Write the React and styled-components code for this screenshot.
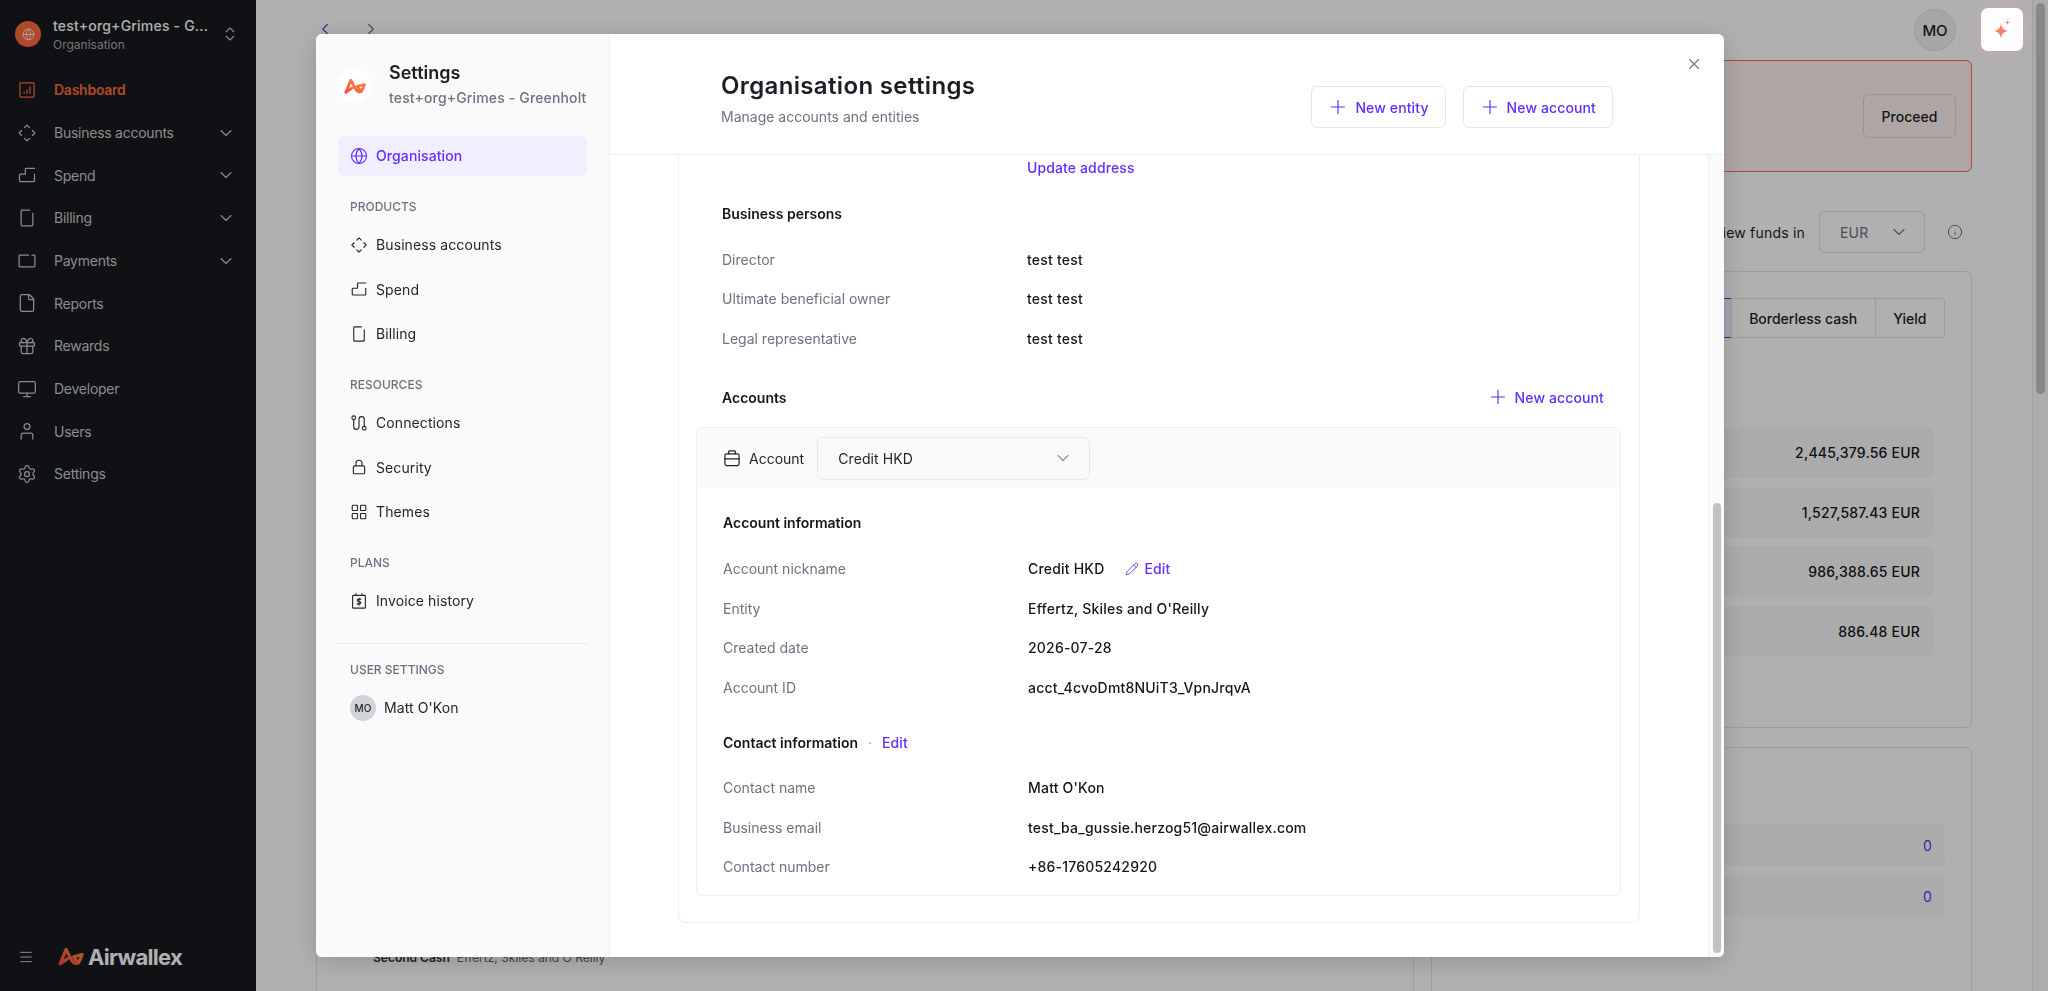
import React from 'react';
import styled, { createGlobalStyle } from 'styled-components';
import {
  ChevronDown, ChevronLeft, ChevronRight, ChevronsUpDown, File, Gift, Globe, Info, LayoutGrid,
  Menu, Monitor, Pencil, Plus, Settings as SettingsIcon, X,
} from 'lucide-react';

const PURPLE = '#612fff';
const FONT = `Inter, "Noto Sans", "Liberation Sans", sans-serif`;

const Global = createGlobalStyle`
  html, body { margin: 0; height: 100%; overflow: hidden; }
  body { font-family: ${FONT}; color: #1b1f24; background: #fff; }
  * { box-sizing: border-box; }
`;

/* small hand drawn icons that the packages don't have */
const Svg = ({ size = 18, children, sw = 1.5 }) => (
  <svg width={size} height={size} viewBox="0 0 24 24" fill="none" stroke="currentColor" strokeWidth={sw} strokeLinecap="round" strokeLinejoin="round">
    {children}
  </svg>
);
const DashIcon = (p) => <Svg {...p}><rect x="3.5" y="3.5" width="17" height="17" rx="1" /><path d="M8.5 16v-1.5M12 16v-4M15.5 16V8" /></Svg>;
const DiamondIcon = (p) => <Svg {...p}><path d="M9 5.5 12 2.5l3 3M18.5 9l3 3-3 3M15 18.5l-3 3-3-3M5.5 15l-3-3 3-3" /></Svg>;
const StairIcon = (p) => <Svg {...p}><path d="M21 4H11a1 1 0 0 0-1 1v6H4a1 1 0 0 0-1 1v7a1 1 0 0 0 1 1h16a1 1 0 0 0 1-1v-8" /></Svg>;
const BillIcon = (p) => <Svg {...p}><path d="M15 2.5H6a1 1 0 0 0-1 1v17a1 1 0 0 0 1 1h12a1 1 0 0 0 1-1V6.5" /></Svg>;
const PayIcon = (p) => <Svg {...p}><path d="M14 5H3.5a1 1 0 0 0-1 1v12a1 1 0 0 0 1 1h17a1 1 0 0 0 1-1V6a1 1 0 0 0-1-1H18" /></Svg>;
const UserIcon = (p) => <Svg {...p}><circle cx="12" cy="6.5" r="3.5" /><path d="M5 21.5V17a2.5 2.5 0 0 1 2.5-2.5h9A2.5 2.5 0 0 1 19 17v4.5" /></Svg>;
const RouteIcon = (p) => <Svg {...p}><circle cx="5" cy="5" r="2.5" /><circle cx="19" cy="19" r="2.5" /><path d="M5 7.5V17a3.5 3.5 0 0 0 7 0V7a3.5 3.5 0 0 1 7 0v9.5" /></Svg>;
const LockIcon = (p) => <Svg {...p}><path d="M8 10V7a4 4 0 0 1 8 0v3" /><rect x="4.5" y="10.5" width="15" height="10.5" rx="1.5" /></Svg>;
const InvoiceIcon = (p) => <Svg {...p}><rect x="3.5" y="4.5" width="17" height="17" rx="1" /><path d="M8 2v2.5M16 2v2.5M14.5 9.500h-3.200a1.600 1.600 0 0 0 0 3.200h1.400a1.600 1.600 0 0 1 0 3.200H9.500M12 8v9.500" /></Svg>;
const CaseIcon = (p) => <Svg {...p}><rect x="3.5" y="7" width="17" height="14" rx="2" /><path d="M8 7V4.500a1 1 0 0 1 1-1h6a1 1 0 0 1 1 1V7M3.500 13h17" /></Svg>;

const LogoMark = ({ size = 24, id = 'awx' }) => (
  <svg width={size} height={size * 0.72} viewBox="0 0 32 23" fill="none">
    <defs>
      <linearGradient id={id} x1="0" y1="1" x2="1" y2="0">
        <stop offset="0" stopColor="#ff4b3e" />
        <stop offset="1" stopColor="#ff8a3a" />
      </linearGradient>
    </defs>
    <path d="M2.500 20 11 14 M2.500 20 9.500 3 15 13.500c1.700 3.300 4 6 6.500 6 2.200 0 3.500-1.700 5-5l2-5.500-10 2.500 5.500 7.500" stroke={`url(#${id})`} strokeWidth="3.800" strokeLinecap="round" strokeLinejoin="round" />
  </svg>
);

const Page = styled.div`
  display: flex;
  height: 991px;
  width: 2048px;
  overflow: hidden;
`;

/* dark left rail */
const Rail = styled.aside`
  width: 256px;
  flex: none;
  background: #16191d;
  color: #cbcbcb;
  display: flex;
  flex-direction: column;
`;
const OrgSwitch = styled.div`
  height: 68.67px;
  display: flex;
  align-items: center;
  padding: 0 17px 0 15px;
`;
const OrgBadge = styled.div`
  width: 26px;
  height: 26px;
  border-radius: 50%;
  background: #ff6a3d;
  color: #fff;
  display: flex;
  align-items: center;
  justify-content: center;
  flex: none;
`;
const OrgText = styled.div`
  margin-left: 12px;
  flex: 1;
`;
const OrgName = styled.div`
  font-size: 14px;
  line-height: 20px;
  font-weight: 500;
  letter-spacing: 0.2px;
  color: #fff;
`;
const OrgSub = styled.div`
  font-size: 12px;
  line-height: 17px;
  color: #a9a9a9;
`;
const RailNav = styled.nav`
  display: grid;
  grid-auto-rows: 42.67px;
`;
const RailItem = styled.div`
  display: flex;
  align-items: center;
  padding: 0 20px 0 17px;
  font-size: 14px;
  letter-spacing: -0.25px;
  font-weight: ${(p) => (p.$active ? 600 : 400)};
  color: ${(p) => (p.$active ? '#ff6a3d' : '#cbcbcb')};
  span { margin-left: 17px; flex: 1; }
`;
const RailFoot = styled.div`
  margin-top: auto;
  height: 68px;
  display: flex;
  align-items: center;
  padding-left: 18px;
`;
const Wordmark = styled.div`
  display: flex;
  align-items: center;
  margin-left: 24px;
  font-size: 22px;
  font-weight: 700;
  letter-spacing: -0.7px;
  color: #fff;
  gap: 3px;
`;

/* dashboard behind the dialog */
const Main = styled.main`
  flex: 1;
  min-width: 0;
`;
const TopBar = styled.div`
  height: 60px;
  padding: 8px 9px 0 60px;
  display: flex;
  align-items: flex-start;
  color: #3f51b5;
`;
const BackForward = styled.div`
  display: flex;
  gap: 28px;
  margin-top: 12px;
  flex: 1;
`;
const Avatar = styled.div`
  width: 42px;
  height: 42px;
  margin-top: 1px;
  border-radius: 50%;
  background: #f0f1f2;
  border: 1px solid #dfe1e4;
  color: #1b1f24;
  font-size: 15px;
  font-weight: 500;
  display: flex;
  align-items: center;
  justify-content: center;
`;
const AiButton = styled.div`
  position: relative;
  z-index: 30;
  width: 42px;
  height: 43px;
  margin-left: 25px;
  border-radius: 7px;
  background: #fff;
  box-shadow: 0 0 14px rgba(255, 170, 170, 0.35);
  display: flex;
  align-items: center;
  justify-content: center;
`;
const Body = styled.div`
  padding: 0 60px;
`;
const Alert = styled.div`
  height: 112px;
  border: 1px solid #ff6f61;
  border-radius: 6px;
  background: #fdf1ef;
  display: flex;
  align-items: center;
  justify-content: flex-end;
  padding-right: 15px;
`;
const GhostButton = styled.div`
  width: 93px;
  height: 44px;
  border: 1px solid #d4d7dc;
  border-radius: 6px;
  font-size: 14px;
  font-weight: 500;
  display: flex;
  align-items: center;
  justify-content: center;
`;
const FundsRow = styled.div`
  display: flex;
  justify-content: flex-end;
  align-items: center;
  height: 42px;
  margin-top: 39px;
  font-size: 14px;
  letter-spacing: 0.2px;
  padding-right: 9px;
`;
const FundsSelect = styled.div`
  width: 106px;
  height: 42px;
  margin: 0 22px 0 14px;
  padding: 0 15px 0 20px;
  border: 1px solid #e1e3e6;
  border-radius: 6px;
  display: flex;
  align-items: center;
  justify-content: space-between;
  color: #6c7280;
`;
const Card = styled.section`
  border: 1px solid #e1e3e6;
  border-radius: 6px;
  background: #fff;
`;
const BalanceCard = styled(Card)`
  height: 457px;
  margin-top: 18px;
  padding: 26px 26px 0 0;
`;
const Tabs = styled.div`
  display: flex;
  justify-content: flex-end;
  height: 40px;
`;
const Tab = styled.div`
  display: flex;
  align-items: center;
  padding: 0 ${(p) => p.$pad}px;
  font-size: 14px;
  font-weight: 500;
  border: 1px solid ${(p) => (p.$active ? PURPLE : '#dfe1e4')};
  margin-left: -1px;
  ${(p) => (p.$active ? 'background: #f0eeff; width: 400px;' : '')}
  &:last-child { border-radius: 0 4px 4px 0; }
`;
const BalanceRows = styled.div`
  display: grid;
  grid-auto-rows: 51px;
  row-gap: 8.5px;
  margin: 89px 12px 0 300px;
`;
const BalanceRow = styled.div`
  background: #f8f8f8;
  border-radius: 6px;
  display: flex;
  align-items: center;
  justify-content: flex-end;
  padding-right: 13px;
  font-size: 14px;
  font-weight: 500;
  letter-spacing: 0.2px;
  color: #14171a;
`;
const SplitRow = styled.div`
  display: grid;
  grid-template-columns: 1098px 541px;
  gap: 17px;
  margin-top: 19px;
`;
const HistoryCard = styled(Card)`
  height: 400px;
  padding: 202px 0 0 56px;
  font-size: 12px;
  color: #5f6570;
  b { font-weight: 600; color: #2b2f36; margin-right: 7px; }
`;
const CountCard = styled(Card)`
  height: 400px;
  padding: 76px 26px 0 28px;
  display: grid;
  grid-auto-rows: 42px;
  row-gap: 9px;
`;
const CountRow = styled(BalanceRow)`
  color: ${PURPLE};
  font-weight: 400;
`;
const PageScroll = styled.div`
  width: 16px;
  flex: none;
  background: #fafafa;
  border-left: 1px solid #e6e6e6;
  padding: 3px 3px 0 3px;
`;
const PageThumb = styled.div`
  height: 391px;
  border-radius: 5px;
  background: #c6c6c6;
`;

const Scrim = styled.div`
  position: fixed;
  inset: 0;
  z-index: 10;
  background: rgba(0, 0, 0, 0.31);
`;

/* the dialog */
const Dialog = styled.div`
  position: fixed;
  z-index: 20;
  left: 316px;
  top: 34px;
  width: 1408px;
  height: 923px;
  background: #fff;
  border-radius: 6px;
  overflow: hidden;
  display: flex;
  box-shadow: 0 4px 24px rgba(0, 0, 0, 0.18);
`;
const Side = styled.div`
  width: 294px;
  flex: none;
  background: #fafafa;
  border-right: 1px solid #f0f0f2;
  padding: 27px 22px 0 22px;
`;
const SideHead = styled.div`
  display: flex;
  align-items: center;
  gap: 17px;
  margin-bottom: 25px;
`;
const LogoDisc = styled.div`
  width: 34px;
  height: 34px;
  flex: none;
  border-radius: 50%;
  background: #fff;
  display: flex;
  align-items: center;
  justify-content: center;
`;
const SideTitle = styled.div`
  font-size: 18px;
  line-height: 24px;
  font-weight: 600;
`;
const SideSub = styled.div`
  font-size: 14px;
  line-height: 26px;
  font-weight: 500;
  letter-spacing: 0.15px;
  color: #6c7280;
  white-space: nowrap;
`;
const SideItem = styled.div`
  display: flex;
  align-items: center;
  gap: 8px;
  height: ${(p) => (p.$active ? 40 : 44.5)}px;
  padding: 0 0 1px 12px;
  font-size: 14px;
  letter-spacing: 0.1px;
  font-weight: ${(p) => (p.$active ? 500 : 400)};
  border-radius: 6px;
  color: ${(p) => (p.$active ? PURPLE : '#22262b')};
  background: ${(p) => (p.$active ? '#f0eeff' : 'transparent')};
  width: 249px;
`;
const SideLabel = styled.div`
  font-size: 12px;
  line-height: 16px;
  font-weight: 500;
  color: #6c7280;
  padding-left: 12px;
  margin: ${(p) => p.$top}px 0 8px;
`;
const SideRule = styled.div`
  width: 249px;
  height: 1px;
  background: #e9e9ec;
  margin: 19.5px 0 18px;
`;
const SmallAvatar = styled.div`
  width: 26px;
  height: 26px;
  border-radius: 50%;
  background: #d1d4d9;
  font-size: 10px;
  font-weight: 500;
  display: flex;
  align-items: center;
  justify-content: center;
`;
const Pane = styled.div`
  flex: 1;
  min-width: 0;
  display: flex;
  flex-direction: column;
`;
const PaneHead = styled.header`
  position: relative;
  height: 121px;
  flex: none;
  border-bottom: 1px solid #eeeef0;
  padding: 0 111px 0 111px;
  display: flex;
  align-items: flex-end;
  justify-content: space-between;
`;
const PaneTitleWrap = styled.div`
  padding-bottom: 27px;
`;
const PaneTitle = styled.h1`
  margin: 0 0 5px;
  font-size: 24px;
  line-height: 32px;
  font-weight: 600;
  letter-spacing: 0.35px;
`;
const PaneSub = styled.div`
  font-size: 14px;
  line-height: 20px;
  color: #6c7280;
`;
const HeadActions = styled.div`
  display: flex;
  gap: 17px;
  padding-bottom: 26px;
`;
const OutlineButton = styled.div`
  height: 42px;
  padding: 0 16px 0 15px;
  border: 1px solid #e6e7ea;
  border-radius: 6px;
  display: flex;
  align-items: center;
  gap: 6px;
  font-size: 14px;
  font-weight: 500;
  letter-spacing: 0.12px;
  color: ${PURPLE};
`;
const CloseButton = styled.div`
  position: absolute;
  top: 21px;
  right: 21px;
  color: #6c7280;
  display: flex;
`;
const PaneBody = styled.div`
  flex: 1;
  min-height: 0;
  display: flex;
`;
const Scroller = styled.div`
  flex: 1;
  min-width: 0;
  padding: 0 68px 34px;
`;
const Sheet = styled.div`
  height: 100%;
  border: 1px solid #eeeef0;
  border-top: none;
  border-radius: 0 0 8px 8px;
  padding: 0 18px 0 17px;
`;
const Block = styled.div`
  padding: 0 17px 0 26px;
`;
const FieldRow = styled.div`
  display: grid;
  grid-template-columns: 305px 1fr;
  align-items: center;
  height: ${(p) => p.$h || 39.5}px;
  font-size: 14px;
`;
const FieldLabel = styled.div`
  color: #6c7280;
`;
const FieldValue = styled.div`
  font-weight: 500;
  letter-spacing: 0.2px;
  color: #14171a;
  display: flex;
  align-items: center;
`;
const TextLink = styled.span`
  display: inline-flex;
  align-items: center;
  gap: ${(p) => p.$gap || 0}px;
  margin-left: ${(p) => p.$ml || 0}px;
  font-size: 14px;
  font-weight: 500;
  letter-spacing: 0.12px;
  color: ${PURPLE};
`;
const BlockTitle = styled.div`
  display: flex;
  align-items: center;
  justify-content: ${(p) => (p.$spread ? 'space-between' : 'flex-start')};
  height: 20px;
  margin: ${(p) => p.$mt}px 0 ${(p) => p.$mb}px;
  font-size: 14px;
  font-weight: 600;
  color: #14171a;
`;
const Dot = styled.span`
  margin: 0 10px;
  color: #9a9fa8;
  font-weight: 400;
`;
const AccountBox = styled.div`
  border: 1px solid #eeeef0;
  border-radius: 6px;
  height: 469px;
  overflow: hidden;
`;
const AccountBar = styled.div`
  height: 60px;
  background: #fafafa;
  display: flex;
  align-items: center;
  padding-left: 25px;
  font-size: 14px;
  color: #22262b;
  span { margin-left: 7px; }
`;
const AccountSelect = styled.div`
  width: 273px;
  height: 43px;
  margin-left: 13px;
  padding: 0 16px 0 20px;
  border: 1px solid #e6e7ea;
  border-radius: 6px;
  display: flex;
  align-items: center;
  justify-content: space-between;
  font-size: 14px;
  letter-spacing: 0.1px;
  color: #22262b;
`;
const AccountBody = styled.div`
  padding: 0 26px;
`;
const ThumbTrack = styled.div`
  width: 16px;
  flex: none;
  background: #fafafa;
  border-left: 1px solid #eeeef0;
  padding: 348px 3px 4px 4px;
`;
const Thumb = styled.div`
  height: 100%;
  border-radius: 5px;
  background: #c2c2c2;
`;

const railItems = [
  { label: 'Dashboard', Icon: DashIcon, active: true },
  { label: 'Business accounts', Icon: DiamondIcon, more: true },
  { label: 'Spend', Icon: StairIcon, more: true },
  { label: 'Billing', Icon: BillIcon, more: true },
  { label: 'Payments', Icon: PayIcon, more: true },
  { label: 'Reports', Icon: File },
  { label: 'Rewards', Icon: Gift },
  { label: 'Developer', Icon: Monitor },
  { label: 'Users', Icon: UserIcon },
  { label: 'Settings', Icon: SettingsIcon },
];

const SideLink = ({ Icon, children, active }) => (
  <SideItem $active={active}>
    <Icon size={18} strokeWidth={1.5} />
    {children}
  </SideItem>
);

const Field = ({ label, children }) => (
  <FieldRow>
    <FieldLabel>{label}</FieldLabel>
    <FieldValue>{children}</FieldValue>
  </FieldRow>
);

const App = () => (
  <Page>
    <Global />
    <Rail>
      <OrgSwitch>
        <OrgBadge><Globe size={13} strokeWidth={1.5} /></OrgBadge>
        <OrgText>
          <OrgName>test+org+Grimes - G...</OrgName>
          <OrgSub>Organisation</OrgSub>
        </OrgText>
        <ChevronsUpDown size={18} strokeWidth={1.5} />
      </OrgSwitch>
      <RailNav>
        {railItems.map(({ label, Icon, active, more }) => (
          <RailItem key={label} $active={active}>
            <Icon size={20} strokeWidth={1.5} />
            <span>{label}</span>
            {more && <ChevronDown size={20} strokeWidth={1.3} />}
          </RailItem>
        ))}
      </RailNav>
      <RailFoot>
        <Menu size={16} strokeWidth={1.5} />
        <Wordmark><LogoMark size={27} id="awx-rail" />Airwallex</Wordmark>
      </RailFoot>
    </Rail>

    <Main>
      <TopBar>
        <BackForward>
          <ChevronLeft size={18} strokeWidth={1.5} />
          <ChevronRight size={18} strokeWidth={1.5} color="#6c7280" />
        </BackForward>
        <Avatar>MO</Avatar>
        <AiButton>
          <svg width="18" height="20" viewBox="0 0 18 20">
            <defs>
              <linearGradient id="spark" x1="0" y1="0.3" x2="1" y2="0.8">
                <stop offset="0" stopColor="#ff8a2c" />
                <stop offset="0.55" stopColor="#ff7d6a" />
                <stop offset="1" stopColor="#9a6bff" />
              </linearGradient>
            </defs>
            <path d="M8 3C8.700 8 10 9.800 15 11c-5 1.200-6.300 3-7 8-.7-5-2-6.800-7-8 5-1.200 6.300-3 7-8Z" fill="url(#spark)" />
            <path d="M14.500 0c.2 1.500.8 2.200 2.500 2.500-1.700.3-2.300 1-2.500 2.500-.2-1.500-.8-2.200-2.500-2.500 1.700-.3 2.300-1 2.500-2.500Z" fill="#ff6f7d" />
          </svg>
        </AiButton>
      </TopBar>
      <Body>
        <Alert><GhostButton>Proceed</GhostButton></Alert>
        <FundsRow>
          View funds in
          <FundsSelect>EUR<ChevronDown size={20} strokeWidth={1.3} /></FundsSelect>
          <Info size={16} strokeWidth={1.5} color="#6c7280" />
        </FundsRow>
        <BalanceCard>
          <Tabs>
            <Tab $active $pad={20} />
            <Tab $pad={17.5}>Borderless cash</Tab>
            <Tab $pad={17.5}>Yield</Tab>
          </Tabs>
          <BalanceRows>
            <BalanceRow>2,445,379.56 EUR</BalanceRow>
            <BalanceRow>1,527,587.43 EUR</BalanceRow>
            <BalanceRow>986,388.65 EUR</BalanceRow>
            <BalanceRow>886.48 EUR</BalanceRow>
          </BalanceRows>
        </BalanceCard>
        <SplitRow>
          <HistoryCard><b>Second Cash</b>Effertz, Skiles and O'Reilly</HistoryCard>
          <CountCard>
            <CountRow>0</CountRow>
            <CountRow>0</CountRow>
          </CountCard>
        </SplitRow>
      </Body>
    </Main>
    <PageScroll><PageThumb /></PageScroll>

    <Scrim />
    <Dialog>
      <Side>
        <SideHead>
          <LogoDisc><LogoMark size={23} id="awx-side" /></LogoDisc>
          <div>
            <SideTitle>Settings</SideTitle>
            <SideSub>test+org+Grimes - Greenholt</SideSub>
          </div>
        </SideHead>
        <SideLink Icon={Globe} active>Organisation</SideLink>
        <SideLabel $top={23}>PRODUCTS</SideLabel>
        <SideLink Icon={DiamondIcon}>Business accounts</SideLink>
        <SideLink Icon={StairIcon}>Spend</SideLink>
        <SideLink Icon={BillIcon}>Billing</SideLink>
        <SideLabel $top={20.5}>RESOURCES</SideLabel>
        <SideLink Icon={RouteIcon}>Connections</SideLink>
        <SideLink Icon={LockIcon}>Security</SideLink>
        <SideLink Icon={LayoutGrid}>Themes</SideLink>
        <SideLabel $top={20.5}>PLANS</SideLabel>
        <SideLink Icon={InvoiceIcon}>Invoice history</SideLink>
        <SideRule />
        <SideLabel $top={0}>USER SETTINGS</SideLabel>
        <SideItem><SmallAvatar>MO</SmallAvatar>Matt O'Kon</SideItem>
      </Side>
      <Pane>
        <PaneHead>
          <PaneTitleWrap>
            <PaneTitle>Organisation settings</PaneTitle>
            <PaneSub>Manage accounts and entities</PaneSub>
          </PaneTitleWrap>
          <HeadActions>
            <OutlineButton><Plus size={22} strokeWidth={1.3} />New entity</OutlineButton>
            <OutlineButton><Plus size={22} strokeWidth={1.3} />New account</OutlineButton>
          </HeadActions>
          <CloseButton><X size={18} strokeWidth={1.5} /></CloseButton>
        </PaneHead>
        <PaneBody>
          <Scroller>
            <Sheet>
              <Block>
                <FieldRow $h={25}>
                  <span />
                  <TextLink>Update address</TextLink>
                </FieldRow>
                <BlockTitle $mt={23} $mb={16.5}>Business persons</BlockTitle>
                <Field label="Director">test test</Field>
                <Field label="Ultimate beneficial owner">test test</Field>
                <Field label="Legal representative">test test</Field>
                <BlockTitle $spread $mt={29} $mb={20}>
                  Accounts
                  <TextLink $gap={6}><Plus size={22} strokeWidth={1.3} />New account</TextLink>
                </BlockTitle>
              </Block>
              <AccountBox>
                <AccountBar>
                  <CaseIcon size={20} />
                  <span>Account</span>
                  <AccountSelect>Credit HKD<ChevronDown size={20} strokeWidth={1.3} color="#8a9099" /></AccountSelect>
                </AccountBar>
                <AccountBody>
                  <BlockTitle $mt={24} $mb={17}>Account information</BlockTitle>
                  <Field label="Account nickname">
                    Credit HKD
                    <TextLink $ml={21} $gap={5}><Pencil size={14} strokeWidth={1.5} />Edit</TextLink>
                  </Field>
                  <Field label="Entity">Effertz, Skiles and O'Reilly</Field>
                  <Field label="Created date">2026-07-28</Field>
                  <Field label="Account ID">acct_4cvoDmt8NUiT3_VpnJrqvA</Field>
                  <BlockTitle $mt={25} $mb={16}>
                    Contact information<Dot>·</Dot><TextLink>Edit</TextLink>
                  </BlockTitle>
                  <Field label="Contact name">Matt O'Kon</Field>
                  <Field label="Business email">test_ba_gussie.herzog51@airwallex.com</Field>
                  <Field label="Contact number">+86-17605242920</Field>
                </AccountBody>
              </AccountBox>
            </Sheet>
          </Scroller>
          <ThumbTrack><Thumb /></ThumbTrack>
        </PaneBody>
      </Pane>
    </Dialog>
  </Page>
);

export default App;
